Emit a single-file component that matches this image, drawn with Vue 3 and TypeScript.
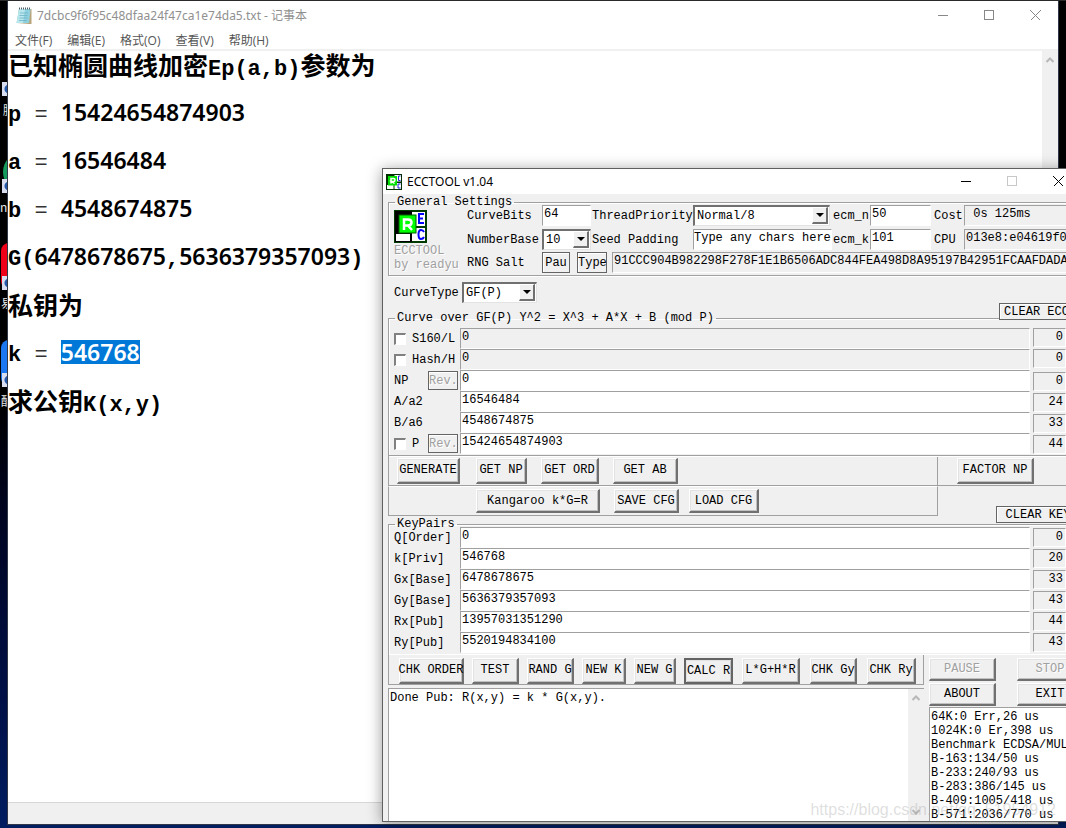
<script setup lang="ts">
import { ref } from 'vue'

type Kind = 'cjk' | 'mono' | 'num' | 'thin' | 'sel'
interface Segment { kind: Kind; text: string }
interface Row { id: string; label: string; value: string; bits: string; check?: boolean; rev?: boolean; readonly?: boolean }

const seg = (kind: Kind, text: string): Segment => ({ kind, text })

const lines: Segment[][] = [
  [seg('cjk', '已知椭圆曲线加密'), seg('mono', 'Ep(a,b)'), seg('cjk', '参数为')],
  [seg('mono', 'p '), seg('thin', '='), seg('mono', ' '), seg('num', '15424654874903')],
  [seg('mono', 'a '), seg('thin', '='), seg('mono', ' '), seg('num', '16546484')],
  [seg('mono', 'b '), seg('thin', '='), seg('mono', ' '), seg('num', '4548674875')],
  [seg('mono', 'G('), seg('num', '6478678675'), seg('mono', ','), seg('num', '5636379357093'), seg('mono', ')')],
  [seg('cjk', '私钥为')],
  [seg('mono', 'k '), seg('thin', '='), seg('mono', ' '), seg('sel', '546768')],
  [seg('cjk', '求公钥'), seg('mono', 'K(x,y)')],
]

const menus = ['文件(F)', '编辑(E)', '格式(O)', '查看(V)', '帮助(H)']

const curveRows = ref<Row[]>([
  { id: 's160', label: 'S160/L', value: '0', bits: '0', check: true, readonly: true },
  { id: 'hash', label: 'Hash/H', value: '0', bits: '0', check: true, readonly: true },
  { id: 'np', label: 'NP', value: '0', bits: '0', rev: true },
  { id: 'a2', label: 'A/a2', value: '16546484', bits: '24' },
  { id: 'b6', label: 'B/a6', value: '4548674875', bits: '33' },
  { id: 'p', label: 'P', value: '15424654874903', bits: '44', check: true, rev: true },
])

const keyRows = ref<Row[]>([
  { id: 'q', label: 'Q[Order]', value: '0', bits: '0' },
  { id: 'k', label: 'k[Priv]', value: '546768', bits: '20' },
  { id: 'gx', label: 'Gx[Base]', value: '6478678675', bits: '33' },
  { id: 'gy', label: 'Gy[Base]', value: '5636379357093', bits: '43' },
  { id: 'rx', label: 'Rx[Pub]', value: '13957031351290', bits: '44' },
  { id: 'ry', label: 'Ry[Pub]', value: '5520194834100', bits: '43' },
])

const bench = [
  '64K:0 Err,26 us',
  '1024K:0 Er,398 us',
  'Benchmark ECDSA/MUL',
  'B-163:134/50 us',
  'B-233:240/93 us',
  'B-283:386/145 us',
  'B-409:1005/418 us',
  'B-571:2036/770 us',
]

const salt = '91CCC904B982298F278F1E1B6506ADC844FEA498D8A95197B42951FCAAFDADA10'
const log = ref('Done Pub: R(x,y) = k * G(x,y).')
</script>

<template>
  <main class="desktop">
    <span class="dark-top"></span>
    <span class="tile green"></span>
    <span class="tile red"></span>
    <span class="tile blue"></span>
    <span class="shortcut s1"></span>
    <span class="shortcut s2"></span>
    <span class="shortcut s3"></span>
    <span class="shortcut s4"></span>
    <span class="caption c1">腾</span>
    <span class="caption c2">nr</span>
    <span class="caption c3">易</span>
    <span class="caption c4">酷</span>

    <section class="notepad">
      <header class="np-title">
        <svg class="np-icon" width="16" height="18" viewBox="0 0 16 18" aria-hidden="true">
          <path d="M3 2h12.5v15H13L1 16z" fill="#b8a57c" />
          <path d="M3 2h11.5l-1.5 14H0.500z" fill="#8fd0de" />
          <path d="M3 2h6L7 16H0.500z" fill="#b9e7ee" />
          <path d="M4 6h8M3.500 8.500h8M3.500 11h8M3 13.500h8" stroke="#6fb4c6" stroke-width="0.800" />
          <path d="M3 1.500h12" stroke="#50606a" stroke-width="2" stroke-dasharray="1 1" />
        </svg>
        <h1>7dcbc9f6f95c48dfaa24f47ca1e74da5.txt - 记事本</h1>
        <div class="caption-buttons">
          <button aria-label="最小化"><svg width="11" height="11"><path d="M0 5.500h10" /></svg></button>
          <button aria-label="最大化"><svg width="11" height="11"><path d="M0.500 0.500h9v9h-9z" /></svg></button>
          <button aria-label="关闭"><svg width="11" height="11"><path d="M0.500 0.500l10 10M10.500 0.500l-10 10" /></svg></button>
        </div>
      </header>
      <nav class="np-menu">
        <button v-for="m in menus" :key="m">{{ m }}</button>
      </nav>
      <div class="np-body">
        <div class="np-text" role="textbox" aria-multiline="true" aria-label="文本" contenteditable="true" spellcheck="false">
          <p v-for="(line, i) in lines" :key="i"><span v-for="(s, j) in line" :key="j" :class="s.kind">{{ s.text }}</span></p>
        </div>
        <div class="np-scroll">
          <svg width="8" height="6"><path d="M0.500 5L4 1.500 7.500 5" fill="none" stroke="#b8b8b8" stroke-width="2" /></svg>
        </div>
      </div>
      <footer class="np-status"></footer>
    </section>

    <section class="ecc">
      <header class="ecc-title">
        <svg width="16" height="16" viewBox="0 0 32 32" aria-hidden="true">
          <rect width="32" height="32" fill="#003000" />
          <rect x="17" y="2" width="13" height="13" fill="#fff" />
          <rect x="17" y="18" width="13" height="12" fill="#fff" />
          <rect x="2" y="22" width="13" height="8" fill="#fff" />
          <rect x="4" y="4" width="18" height="19" fill="#00e000" />
          <path d="M10 19V9h5q3 0 3 3t-3 3h-4l6 4" fill="none" stroke="#fff" stroke-width="3" />
          <path d="M29 4h-4v9h4M29 20h-5v8h5" fill="none" stroke="#2020e0" stroke-width="2" />
        </svg>
        <h2>ECCTOOL v1.04</h2>
        <div class="caption-buttons">
          <button aria-label="Minimize"><svg width="11" height="11"><path d="M0 5.500h10" /></svg></button>
          <button aria-label="Maximize" disabled><svg width="11" height="11"><path d="M0.500 0.500h9v9h-9z" /></svg></button>
          <button aria-label="Close"><svg width="11" height="11"><path d="M0.500 0.500l10 10M10.500 0.500l-10 10" /></svg></button>
        </div>
      </header>

      <div class="client">
        <fieldset class="general">
          <legend>General Settings</legend>
          <div class="brand">
            <svg width="33" height="33" viewBox="0 0 33 33" aria-hidden="true">
              <rect width="33" height="33" fill="#003c00" />
              <rect x="1" y="1" width="17" height="31" fill="#000" />
              <rect x="18" y="2" width="13" height="14" fill="#fff" />
              <rect x="18" y="18" width="13" height="13" fill="#fff" />
              <rect x="2" y="24" width="14" height="7" fill="#fff" />
              <rect x="5" y="5" width="17" height="18" fill="#00ff00" stroke="#006000" />
              <path d="M10 20V9.500h4q3.500 0 3.500 3t-3.500 3h-3M14 15.500l4 4.500" fill="none" stroke="#fff" stroke-width="2.500" />
              <path d="M30 4h-5v9h5M25 8.500h4" fill="none" stroke="#0000ff" stroke-width="2" />
              <path d="M30 22q-1-2-3-2-2.500 0-2.500 4.500t2.500 4.500q2 0 3-2" fill="none" stroke="#0000ff" stroke-width="2" />
            </svg>
            <span>ECCTOOL</span>
            <span>by readyu</span>
          </div>
          <div class="settings">
            <div class="grid">
              <label for="bits">CurveBits</label>
              <input id="bits" class="w49" value="64" />
              <label for="prio">ThreadPriority</label>
              <span class="combo"><select id="prio"><option>Normal/8</option></select><i></i></span>
              <label for="ecmn">ecm_n</label>
              <input id="ecmn" class="gap-end" value="50" />
              <label for="cost">Cost</label>
              <input id="cost" class="ro" readonly value=" 0s 125ms" />
              <label for="base">NumberBase</label>
              <span class="combo w49"><select id="base"><option>10</option></select><i></i></span>
              <label for="seed">Seed Padding</label>
              <input id="seed" value="Type any chars here" />
              <label for="ecmk">ecm_k</label>
              <input id="ecmk" class="gap-end" value="101" />
              <label for="cpu">CPU</label>
              <input id="cpu" class="ro" readonly value="013e8:e04619f0" />
            </div>
            <div class="salt">
              <label for="salt">RNG Salt</label>
              <button class="flat">Pau</button>
              <button class="flat">Type</button>
              <input id="salt" class="ro" readonly :value="salt" />
            </div>
          </div>
        </fieldset>

        <div class="curve-type">
          <label for="ctype">CurveType</label>
          <span class="combo"><select id="ctype"><option>GF(P)</option></select><i></i></span>
        </div>

        <fieldset class="group curve">
          <legend>Curve over GF(P) Y^2 = X^3 + A*X + B (mod P)</legend>
          <button class="flat clear clear-ecc">CLEAR ECC</button>
          <div v-for="r in curveRows" :key="r.id" class="row">
            <div class="row-label">
              <input v-if="r.check" :id="r.id + '-on'" type="checkbox" :aria-label="r.label" />
              <label :for="r.id">{{ r.label }}</label>
              <button v-if="r.rev" class="flat rev" disabled>Rev.</button>
            </div>
            <input :id="r.id" v-model="r.value" :readonly="r.readonly" :class="{ ro: r.readonly }" />
            <output :for="r.id" class="bits" :class="{ low: !r.readonly }">{{ r.bits }}</output>
          </div>
        </fieldset>

        <div class="bar bar-get">
          <div class="bar-main">
            <button class="raised b63">GENERATE</button>
            <button class="raised b51">GET NP</button>
            <button class="raised b58">GET ORD</button>
            <button class="raised b65">GET AB</button>
          </div>
          <button class="raised factor">FACTOR NP</button>
        </div>
        <div class="bar bar-cfg">
          <button class="raised b124">Kangaroo k*G=R</button>
          <button class="raised b65">SAVE CFG</button>
          <button class="raised b70">LOAD CFG</button>
        </div>

        <fieldset class="group keys">
          <legend>KeyPairs</legend>
          <button class="flat clear clear-key">CLEAR KEY</button>
          <div class="key-rows">
            <div v-for="r in keyRows" :key="r.id" class="row">
              <div class="row-label"><label :for="r.id">{{ r.label }}</label></div>
              <input :id="r.id" v-model="r.value" />
              <output :for="r.id" class="bits">{{ r.bits }}</output>
            </div>
          </div>
        </fieldset>

        <div class="bottom">
          <div class="left">
            <div class="actions">
              <button class="raised b65">CHK ORDER</button>
              <button class="raised b47">TEST</button>
              <button class="raised b47">RAND G</button>
              <button class="raised b44">NEW K</button>
              <button class="raised b42">NEW G</button>
              <button class="raised b49 default">CALC R</button>
              <button class="raised b58 far">L*G+H*R</button>
              <button class="raised b47 far">CHK Gy</button>
              <button class="raised b49">CHK Ry</button>
            </div>
            <div class="log">
              <textarea v-model="log" aria-label="Log" spellcheck="false"></textarea>
              <div class="log-scroll">
                <svg width="8" height="6"><path d="M0.500 5L4 1.500 7.500 5" fill="none" stroke="#b8b8b8" stroke-width="2" /></svg>
                <svg width="8" height="6"><path d="M0.500 1L4 4.500 7.500 1" fill="none" stroke="#b8b8b8" stroke-width="2" /></svg>
              </div>
            </div>
          </div>
          <div class="right">
            <div class="side-buttons">
              <button class="raised" disabled>PAUSE</button>
              <button class="raised" disabled>STOP</button>
              <button class="raised">ABOUT</button>
              <button class="raised">EXIT</button>
            </div>
            <ul class="bench">
              <li v-for="b in bench" :key="b">{{ b }}</li>
            </ul>
          </div>
        </div>
      </div>
    </section>
    <div class="watermark">https://blog.csdn.net/qq_51954912</div>
  </main>
</template>

<style>
html, body { margin: 0; background: #000; }
</style>

<style scoped>
* { box-sizing: border-box; }
.desktop {
  position: relative;
  height: 100vh;
  overflow: hidden;
  background: linear-gradient(#000 0, #000 48%, #000420 62%, #001048 85%, #001d60 100%);
}
button, input, select, textarea { font: inherit; color: inherit; border-radius: 0; margin: 0; }

.dark-top { position: absolute; top: 0; left: 0; right: 0; height: 1px; background: #2a2a2a; }
.tile { position: absolute; left: 2px; width: 40px; }
.tile.green { top: 152px; height: 40px; border-radius: 20px; background: #149a5c; left: 3px; }
.tile.red { top: 243px; height: 46px; border-radius: 8px; background: #f00018; left: 1px; }
.tile.blue { top: 340px; height: 46px; border-radius: 8px; background: #1c78f0; left: 1px; }
.shortcut {
  position: absolute; left: 2px; width: 14px; height: 14px;
  background: radial-gradient(circle at 7px 7px, #2458a8 0, #2458a8 4px, #d8def0 5px);
}
.s1 { top: 82px; } .s2 { top: 179px; } .s3 { top: 276px; } .s4 { top: 373px; }
.caption { position: absolute; left: 1px; color: #e8e8e8; font: 12px/16px "Noto Sans CJK SC", sans-serif; }
.c1 { top: 102px; left: 3px; } .c2 { top: 199px; left: 0; } .c3 { top: 295px; } .c4 { top: 393px; }

.notepad {
  position: absolute; left: 7px; right: 7px; top: 1px; bottom: 3px;
  display: flex; flex-direction: column;
  background: #fff; border: solid #303848; border-width: 0 1px 1px;
  font-family: "Noto Sans", "Noto Sans CJK SC", sans-serif;
}
.np-title { display: flex; align-items: center; height: 29px; padding-left: 8px; }
.np-title h1 { margin: 0 0 0 5px; font: 12px/18px "Noto Sans", "Noto Sans CJK SC", sans-serif; color: #909090; }
.caption-buttons { display: flex; margin-left: auto; align-self: stretch; }
.caption-buttons button { width: 46px; padding: 0; border: 0; background: none; display: flex; align-items: center; justify-content: center; }
.caption-buttons svg { fill: none; stroke: #888; shape-rendering: crispEdges; }
.np-menu { display: flex; gap: 15px; height: 19px; padding-left: 7px; }
.np-menu button { border: 0; background: none; padding: 0; font: 12px/22px "Open Sans", "Noto Sans CJK SC", sans-serif; color: #555; white-space: nowrap; }
.np-body { flex: 1; display: flex; min-height: 0; border-top: 2px solid #f0f0f0; }
.np-text { flex: 1; padding-top: 1px; outline: none; color: #000; font-weight: 700; white-space: pre; overflow: hidden; }
.np-text p { margin: 0 0 24px; height: 24px; font: 700 23px/24px "Noto Sans", sans-serif; }
.cjk, .mono, .num, .thin, .sel { line-height: 24px; }
.cjk { font-family: "Noto Sans CJK SC", sans-serif; font-size: 25px; }
.mono { font-family: "Liberation Mono", monospace; font-size: 22px; }
.num, .sel { font-weight: 600; }
.sel { display: inline-block; height: 24px; background: #0078d7; color: #fff; }
.thin { font-family: "Liberation Mono", monospace; font-size: 22px; font-weight: 400; color: #333; }
.np-scroll { width: 16px; background: #f0f0f0; display: flex; justify-content: center; padding-top: 6px; }
.np-status { height: 22px; background: #f0f0f0; border-top: 1px solid #d7d7d7; }

.ecc {
  position: absolute; left: 382px; right: -16px; top: 168px; bottom: 6px;
  display: flex; flex-direction: column;
  border: 1px solid #606060; background: #f0f0f0; color: #000;
  box-shadow: 0 2px 14px rgba(0, 0, 0, 0.4);
  font: 12px/14px "Liberation Mono", monospace;
}
.ecc-title { display: flex; align-items: center; height: 25px; background: #fff; padding-left: 3px; flex: none; }
.ecc-title h2 { margin: 0 0 0 5px; font: 12px/18px "Noto Sans", sans-serif; color: #000; }
.ecc-title .caption-buttons svg { stroke: #000; }
.ecc-title button:disabled svg { stroke: #c8c8c8; }

.client { flex: 1; display: flex; flex-direction: column; min-height: 0; padding: 1px 9px 0 5px; }
fieldset { margin: 0; min-width: 0; border: 1px solid #a0a0a0; box-shadow: 1px 1px 0 #fff, inset 1px 1px 0 #fff; }
legend { padding: 0 2px; margin-left: 6px; line-height: 14px; }
.general { display: flex; padding: 0 0 2px; flex: none; }
.brand { width: 78px; padding: 1px 0 0 5px; display: flex; flex-direction: column; color: #a0a0a0; text-shadow: 1px 1px 0 #fff; white-space: nowrap; }
.brand svg { margin-bottom: 1px; }
.settings { flex: 1; min-width: 0; margin-top: -4px; display: flex; flex-direction: column; gap: 2px; }
.grid { display: grid; grid-template-columns: 75px 50px 101px 140px 37px 64px 30px 1fr; grid-auto-rows: 21px; row-gap: 3px; align-items: center; }
.grid label { white-space: nowrap; }
.w49 { width: 49px; }
.gap-end, .grid > .combo:not(.w49) { margin-right: 3px; }
.salt { display: flex; height: 21px; align-items: center; }
.salt label { width: 75px; }
.salt button { height: 21px; width: 28px; margin-right: 7px; }
.salt button + button { width: 30px; margin-right: 5px; }
.salt input { flex: 1; }

input:not([type='checkbox']) {
  height: 21px; min-width: 0; padding: 0 1px 3px; background: #fff; outline: none;
  border: 1px solid; border-color: #a0a0a0 #fff #fff #a0a0a0; white-space: pre;
}
#seed { padding: 0 0 3px; margin-right: 1px; }
input.ro:not([type='checkbox']) { background: #f0f0f0; }
input[type='checkbox'] {
  appearance: none; flex: none; width: 12px; height: 12px; margin-right: 6px; background: #fff;
  border: solid; border-width: 2px 1px 1px 2px; border-color: #808080 #fff #fff #808080;
}
.combo { position: relative; display: block; height: 21px; }
.combo select {
  appearance: none; width: 100%; height: 21px; padding: 0 2px; outline: none;
  border: solid; border-width: 2px 1px 1px 2px; border-color: #707070 #e3e3e3 #e3e3e3 #707070; background: #fff;
}
.combo i {
  position: absolute; right: 2px; top: 2px; width: 16px; height: 17px; pointer-events: none;
  background: #f0f0f0; border: solid; border-width: 1px 2px 2px 1px; border-color: #fff #707070 #707070 #fff;
}
.combo i::after { content: ''; position: absolute; left: 3px; top: 5px; border: 4px solid transparent; border-top-color: #000; border-bottom: 0; }
button.flat { padding: 0; border: 1px solid #646464; background: #f0f0f0; box-shadow: inset 1px 1px 0 #fff; white-space: nowrap; }
button:disabled { color: #a0a0a0; text-shadow: 1px 1px 0 #fff; }

.curve-type { display: flex; align-items: center; height: 35px; padding: 0 0 2px 6px; flex: none; }
.curve-type label { width: 68px; }
.curve-type .combo { width: 75px; }

.group { position: relative; padding: 0; flex: none; }
.curve { padding: 3px 0 1px; }
.row { display: flex; height: 21px; align-items: flex-start; }
.row-label { display: flex; align-items: center; width: 71px; height: 21px; padding-left: 5px; flex: none; }
.row-label label { white-space: nowrap; }
.rev { width: 30px; height: 19px; margin-left: auto; margin-right: 2px; }
.row > input:not([type='checkbox']) { flex: 1; }
.bits {
  width: 33px; height: 19px; margin: 0 5px 0 3px; padding-right: 2px; text-align: right; line-height: 17px;
  border: 1px solid; border-color: #a0a0a0 #fff #fff #a0a0a0; flex: none;
}
.bits.low { margin-top: 2px; }
.keys .bits { margin-top: 1px; }
.clear { position: absolute; z-index: 1; height: 17px; }
.clear-ecc { top: -22px; right: -3px; width: 75px; }
.clear-key { top: -25px; right: -9px; width: 84px; }
.keys { border-bottom: 0; margin-top: 1px; }
.key-rows { margin-top: -4px; padding-bottom: 1px; }

button.raised {
  padding: 0; border: solid; border-width: 1px 2px 2px 1px; border-color: #fff #707070 #707070 #fff;
  background: #f0f0f0; box-shadow: inset 1px 1px 0 #e3e3e3, inset -1px -1px 0 #c0c0c0;
  white-space: nowrap; height: 26px; display: flex; align-items: center; justify-content: center; flex: none;
}
button.default { border: 2px solid #646464; margin-right: 1px; }
.far { margin-right: 2px; }
.b42 { width: 42px; } .b44 { width: 44px; } .b47 { width: 47px; } .b49 { width: 49px; } .b51 { width: 51px; } .b58 { width: 58px; }
.b63 { width: 63px; } .b65 { width: 65px; } .b70 { width: 70px; } .b124 { width: 124px; }
.bar { display: flex; flex: none; align-items: center; }
.bar-get { height: 30px; border: 1px solid #a0a0a0; border-top: 0; }
.bar-main { display: flex; align-items: center; gap: 14px; width: 549px; height: 100%; padding-left: 8px; border-right: 1px solid #a0a0a0; }
.bar-main .b63 { margin-right: 2px; }
.factor { width: 77px; margin-left: 19px; }
.bar-cfg { width: 550px; height: 30px; border: 1px solid #a0a0a0; border-top-color: #fff; padding-left: 87px; }
.bar-cfg .b65 { margin: 0 10px 0 14px; }
.bar-cfg .raised { height: 24px; }

.bottom { flex: 1; display: flex; min-height: 0; border-top: 1px solid #a0a0a0; }
.left { width: 536px; display: flex; flex-direction: column; flex: none; }
.actions { display: flex; align-items: center; gap: 8px; height: 30px; padding: 2px 0 0 10px; border: 1px solid #a0a0a0; border-top: 0; flex: none; }
.log { flex: 1; display: flex; min-height: 0; margin-top: 3px; border: solid #a0a0a0; border-width: 1px 0 0 1px; background: #fff; }
.log textarea { flex: 1; border: 0; resize: none; outline: none; padding: 2px 1px; overflow: hidden; background: #fff; }
.log-scroll { width: 16px; background: #f0f0f0; display: flex; flex-direction: column; justify-content: space-between; align-items: center; padding: 6px 0; }
.right { flex: 1; min-width: 0; margin-left: 5px; display: flex; flex-direction: column; }
.side-buttons { display: grid; grid-template-columns: 67px 67px; column-gap: 21px; row-gap: 2px; padding: 3px 0 1px; }
.side-buttons .raised { height: 23px; }
.bench { flex: 1; min-height: 0; margin: 0; padding: 2px 1px 0; list-style: none; background: #fff; border: solid #a0a0a0; border-width: 1px 0 0 1px; overflow: hidden; white-space: nowrap; }

.watermark { position: absolute; right: 10px; bottom: 8px; font: 16px/20px "Liberation Sans", sans-serif; color: rgba(160, 160, 160, 0.35); pointer-events: none; }
</style>
